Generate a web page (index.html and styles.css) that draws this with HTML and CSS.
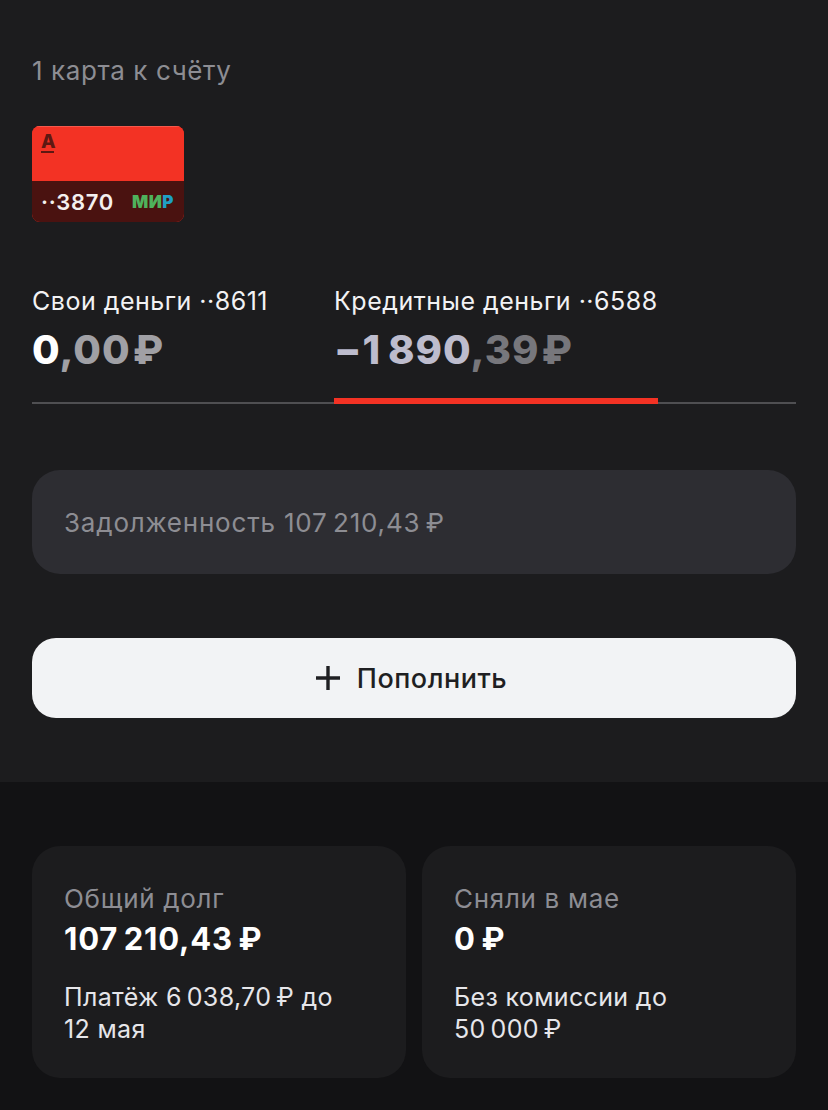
FILE: index.html
```html
<!DOCTYPE html>
<html lang="ru">
  <head>
    <meta charset="UTF-8" />
    <title>Счёт</title>
    <link rel="stylesheet" href="styles.css">
  </head>
  <body>
    <div class="top">
      <div class="cards-title">1 карта к счёту</div>

      <div class="card">
        <div class="card-face">
          <span class="card-logo">А</span>
        </div>
        <div class="card-strip">
          <span class="card-num">··3870</span>
          <span class="mir">МИ<span class="mir-p">Р</span></span>
        </div>
      </div>

      <div class="tabs">
        <div class="tab">
          <div class="tab-label">Свои деньги ··8611</div>
          <div class="tab-sum"><span class="white">0</span><span class="dim">,00</span><span class="dim rub">₽</span></div>
        </div>
        <div class="tab tab-active">
          <div class="tab-label">Кредитные деньги ··6588</div>
          <div class="tab-sum"><span class="lilac">−1&thinsp;890</span><span class="grey">,39</span><span class="grey rub">₽</span></div>
        </div>
      </div>

      <div class="debt">Задолженность 107&thinsp;210,43&thinsp;₽</div>

      <button class="topup">
        <svg class="plus" width="24" height="24" viewBox="0 0 24 24">
          <path d="M12 0V24M0 12H24" stroke="#1f1f22" stroke-width="3.4" fill="none" />
        </svg>
        Пополнить
      </button>
    </div>
    <!-- .top -->

    <div class="bottom">
      <div class="tile">
        <div class="tile-title">Общий долг</div>
        <div class="tile-sum">107&thinsp;210,43&thinsp;₽</div>
        <div class="tile-note">Платёж 6&thinsp;038,70&thinsp;₽ до<br />12 мая</div>
      </div>
      <div class="tile">
        <div class="tile-title">Сняли в мае</div>
        <div class="tile-sum">0&thinsp;₽</div>
        <div class="tile-note">Без комиссии до<br />50&thinsp;000&thinsp;₽</div>
      </div>
    </div>
    <!-- .bottom -->
  </body>
</html>
```

FILE: styles.css
```css
*,
*::before,
*::after {
  box-sizing: border-box;
  padding: 0;
  margin: 0;
  font-family: 'Inter', 'Roboto', sans-serif;
}

body {
  width: 828px;
  height: 1110px;
  overflow: hidden;
  background-color: #121214;
  color: #fff;
}

.top {
  height: 782px;
  padding: 53px 32px 0;
  background-color: #1c1c1e;
}

.cards-title {
  height: 36px;
  font-size: 26px;
  line-height: 36px;
  letter-spacing: 0.6px;
  color: #8d8d93;
}

.card {
  width: 152px;
  height: 96px;
  margin-top: 37px;
  border-radius: 8px;
  overflow: hidden;
  background-color: #f33224;
}

.card-face {
  height: 55px;
  padding: 6px 0 0 9px;
  background-color: #f33224;
  border-top: 1px solid #f5594d;
}

.card-logo {
  display: block;
  width: 13px;
  height: 20px;
  font-size: 19px;
  font-weight: 800;
  line-height: 17px;
  color: #5e1812;
  border-bottom: 2px solid #5e1812;
}

.card-strip {
  display: flex;
  align-items: center;
  justify-content: space-between;
  height: 41px;
  padding: 0 10px 0 9px;
  background-color: #4a1210;
}

.card-num {
  font-size: 22px;
  font-weight: 600;
  color: #f4f0ef;
  letter-spacing: 0.7px;
}

.mir {
  font-size: 17px;
  font-weight: 900;
  letter-spacing: 0.5px;
  color: #4fb25c;
}

.mir-p {
  color: #1f9fc4;
}

.tabs {
  display: flex;
  gap: 66px;
  height: 134px;
  margin-top: 48px;
  margin-bottom: 66px;
  padding-top: 13px;
  border-bottom: 2px solid #4f4f52;
}

.tab {
  height: 121px;
}

.tab-active {
  border-bottom: 6px solid #f33224;
}

.tab-label {
  height: 36px;
  font-size: 25px;
  line-height: 36px;
  letter-spacing: 0.5px;
  color: #f2f2f4;
}

.tab-sum {
  margin-top: 6px;
  font-size: 40px;
  font-weight: 800;
  line-height: 50px;
  letter-spacing: 1px;
}

.rub {
  margin-left: 2px;
}

.white {
  color: #fff;
}

.dim {
  color: #a0a0a5;
}

.lilac {
  color: #bdbccd;
}

.grey {
  color: #77777c;
}

.debt {
  height: 104px;
  padding-left: 32px;
  border-radius: 28px;
  background-color: #2d2d32;
  font-size: 26px;
  line-height: 106px;
  letter-spacing: 0.8px;
  color: #8d8d93;
}

.topup {
  display: flex;
  align-items: center;
  justify-content: center;
  gap: 17px;
  width: 100%;
  height: 80px;
  margin-top: 64px;
  padding-right: 5px;
  border: none;
  border-radius: 24px;
  background-color: #f2f3f5;
  color: #1f1f22;
  font-size: 27px;
  font-weight: 500;
  letter-spacing: 0.5px;
}

.bottom {
  display: grid;
  grid-template-columns: 374px 374px;
  gap: 16px;
  padding: 64px 32px 0;
}

.tile {
  height: 232px;
  padding: 35px 32px 0;
  border-radius: 28px;
  background-color: #1c1c1e;
}

.tile-title {
  height: 36px;
  font-size: 26px;
  line-height: 36px;
  letter-spacing: 0.7px;
  color: #8d8d93;
}

.tile-sum {
  height: 40px;
  margin-top: 2px;
  font-size: 31px;
  font-weight: 700;
  line-height: 40px;
  letter-spacing: 0.8px;
}

.tile-note {
  margin-top: 22px;
  font-size: 25px;
  line-height: 32px;
  letter-spacing: 0.35px;
  color: #e6e6ea;
}
```
